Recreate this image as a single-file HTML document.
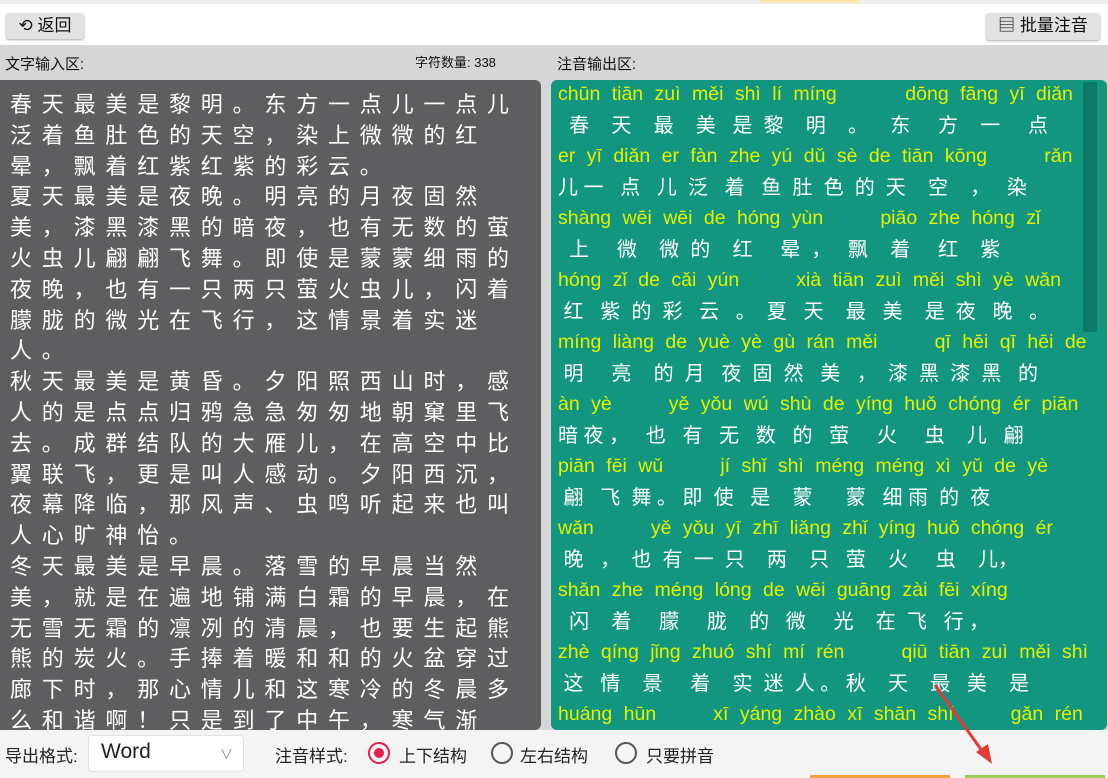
<!DOCTYPE html>
<html><head><meta charset="utf-8"><style>
body{margin:0;width:1108px;height:778px;overflow:hidden;background:#d6d6d6;font-family:"Liberation Sans","Noto Sans CJK SC",sans-serif;position:relative}
.abs{position:absolute}
.top{left:0;top:0;width:1108px;height:45px;background:#fff;border-top:4px solid #eee;box-sizing:border-box}
.btn{background:#e2e2e2;border-radius:3px;box-shadow:0 1px 2px #aaa;font-size:16px;color:#111;line-height:26px}
.left{left:0;top:80px;width:541px;height:650px;background:#5e5e60;border-radius:0 6px 6px 0;overflow:hidden}
.left div div{color:#fff;font-size:22px;letter-spacing:9.8px;line-height:30.8px;padding-left:0;white-space:nowrap}
.right{left:551px;top:80px;width:556px;height:650px;background:#12967f;border-radius:6px;overflow:hidden}
.py{position:absolute;left:7px;color:#e4f200;font-size:19.5px;white-space:pre;word-spacing:6px}
.hz{position:absolute;left:7px;color:#fff;font-size:20px;white-space:pre}
.bot{left:0;top:730px;width:1108px;height:48px;background:#f4f4f4}
.radio{width:22px;height:22px;border:2px solid #555;border-radius:50%;box-sizing:border-box;position:absolute;top:742px}
.lbl{position:absolute;top:742px;font-size:17px;color:#222}
</style></head><body>
<div class="abs top"></div>
<div class="abs" style="left:760px;top:0;width:100px;height:3px;background:#fbe9b0"></div>
<div class="abs btn" style="left:6px;top:13px;width:78px;height:26px;text-align:center;font-size:17px">⟲ 返回</div>
<div class="abs btn" style="left:986px;top:13px;width:114px;height:27px;text-align:center;font-size:17px">▤ 批量注音</div>
<div class="abs" style="left:5px;top:53px;font-size:15px;color:#111">文字输入区:</div>
<div class="abs" style="left:415px;top:52px;font-size:13px;color:#111">字符数量: 338</div>
<div class="abs" style="left:557px;top:53px;font-size:15px;color:#111">注音输出区:</div>
<div class="abs left"><div style="padding-top:10px;padding-left:10px">
<div>春天最美是黎明。东方一点儿一点儿</div>
<div>泛着鱼肚色的天空，染上微微的红</div>
<div>晕，飘着红紫红紫的彩云。</div>
<div>夏天最美是夜晚。明亮的月夜固然</div>
<div>美，漆黑漆黑的暗夜，也有无数的萤</div>
<div>火虫儿翩翩飞舞。即使是蒙蒙细雨的</div>
<div>夜晚，也有一只两只萤火虫儿，闪着</div>
<div>朦胧的微光在飞行，这情景着实迷</div>
<div>人。</div>
<div>秋天最美是黄昏。夕阳照西山时，感</div>
<div>人的是点点归鸦急急匆匆地朝窠里飞</div>
<div>去。成群结队的大雁儿，在高空中比</div>
<div>翼联飞，更是叫人感动。夕阳西沉，</div>
<div>夜幕降临，那风声、虫鸣听起来也叫</div>
<div>人心旷神怡。</div>
<div>冬天最美是早晨。落雪的早晨当然</div>
<div>美，就是在遍地铺满白霜的早晨，在</div>
<div>无雪无霜的凛冽的清晨，也要生起熊</div>
<div>熊的炭火。手捧着暖和和的火盆穿过</div>
<div>廊下时，那心情儿和这寒冷的冬晨多</div>
<div>么和谐啊！只是到了中午，寒气渐</div>
</div></div>
<div class="abs right">
<div class="abs" style="left:532px;top:2px;width:14px;height:250px;background:#0c7a68"></div>
<div class="py" style="top:3px">chūn tiān zuì měi shì lí míng      dōng fāng yī diǎn</div>
<div class="hz" style="top:29px">  春    天    最    美   是  黎    明    。    东     方    一     点</div>
<div class="py" style="top:65px">er yī diǎn er fàn zhe yú dǔ sè de tiān kōng     rǎn</div>
<div class="hz" style="top:91px">儿 一   点   儿  泛   着   鱼  肚  色  的  天    空    ，   染</div>
<div class="py" style="top:127px">shàng wēi wēi de hóng yùn     piāo zhe hóng zǐ</div>
<div class="hz" style="top:153px">  上     微    微  的    红     晕  ，   飘    着     红    紫</div>
<div class="py" style="top:189px">hóng zǐ de cǎi yún     xià tiān zuì měi shì yè wǎn</div>
<div class="hz" style="top:215px"> 红   紫  的  彩   云   。  夏   天    最   美    是  夜   晚   。</div>
<div class="py" style="top:251px">míng liàng de yuè yè gù rán měi     qī hēi qī hēi de</div>
<div class="hz" style="top:277px"> 明     亮    的  月   夜  固  然   美   ，  漆  黑  漆  黑   的</div>
<div class="py" style="top:313px">àn yè     yě yǒu wú shù de yíng huǒ chóng ér piān</div>
<div class="hz" style="top:339px">暗 夜 ，   也   有   无   数   的   萤     火     虫    儿   翩</div>
<div class="py" style="top:375px">piān fēi wǔ     jí shǐ shì méng méng xì yǔ de yè</div>
<div class="hz" style="top:401px"> 翩   飞  舞 。 即  使   是    蒙      蒙   细 雨  的  夜</div>
<div class="py" style="top:437px">wǎn     yě yǒu yī zhī liǎng zhǐ yíng huǒ chóng ér</div>
<div class="hz" style="top:463px"> 晚   ，  也  有  一  只    两    只   萤    火     虫    儿，</div>
<div class="py" style="top:499px">shǎn zhe méng lóng de wēi guāng zài fēi xíng</div>
<div class="hz" style="top:525px">  闪    着     朦     胧    的   微     光    在  飞   行 ，</div>
<div class="py" style="top:561px">zhè qíng jǐng zhuó shí mí rén     qiū tiān zuì měi shì</div>
<div class="hz" style="top:587px"> 这   情    景     着    实  迷  人 。 秋    天    最   美    是</div>
<div class="py" style="top:623px">huáng hūn     xī yáng zhào xī shān shí     gǎn rén</div>
</div>
<div class="abs bot"></div>
<div class="abs" style="left:5px;top:742px;font-size:17px;color:#222">导出格式:</div>
<div class="abs" style="left:88px;top:735px;width:156px;height:37px;background:#fff;border:1px solid #e2e2e2;border-radius:4px;box-sizing:border-box"></div>
<div class="abs" style="left:101px;top:740px;font-size:21px;color:#222">Word</div>
<div class="abs" style="left:220px;top:744px;font-size:13px;color:#888">∨</div>
<div class="lbl" style="left:275px">注音样式:</div>
<div class="radio" style="left:368px;border-color:#e02050"><div style="position:absolute;left:4px;top:4px;width:10px;height:10px;border-radius:50%;background:#e02050"></div></div>
<div class="lbl" style="left:399px">上下结构</div>
<div class="radio" style="left:491px"></div>
<div class="lbl" style="left:520px">左右结构</div>
<div class="radio" style="left:615px"></div>
<div class="lbl" style="left:646px">只要拼音</div>
<div class="abs" style="left:810px;top:775px;width:140px;height:3px;background:#f5a040"></div>
<div class="abs" style="left:965px;top:775px;width:140px;height:3px;background:#9ccc50"></div>
<svg class="abs" style="left:900px;top:660px" width="110" height="110"><line x1="35" y1="25" x2="85" y2="95" stroke="#e53935" stroke-width="3"/><polygon points="92,104 76,92 88,84" fill="#e53935"/></svg>
</body></html>
